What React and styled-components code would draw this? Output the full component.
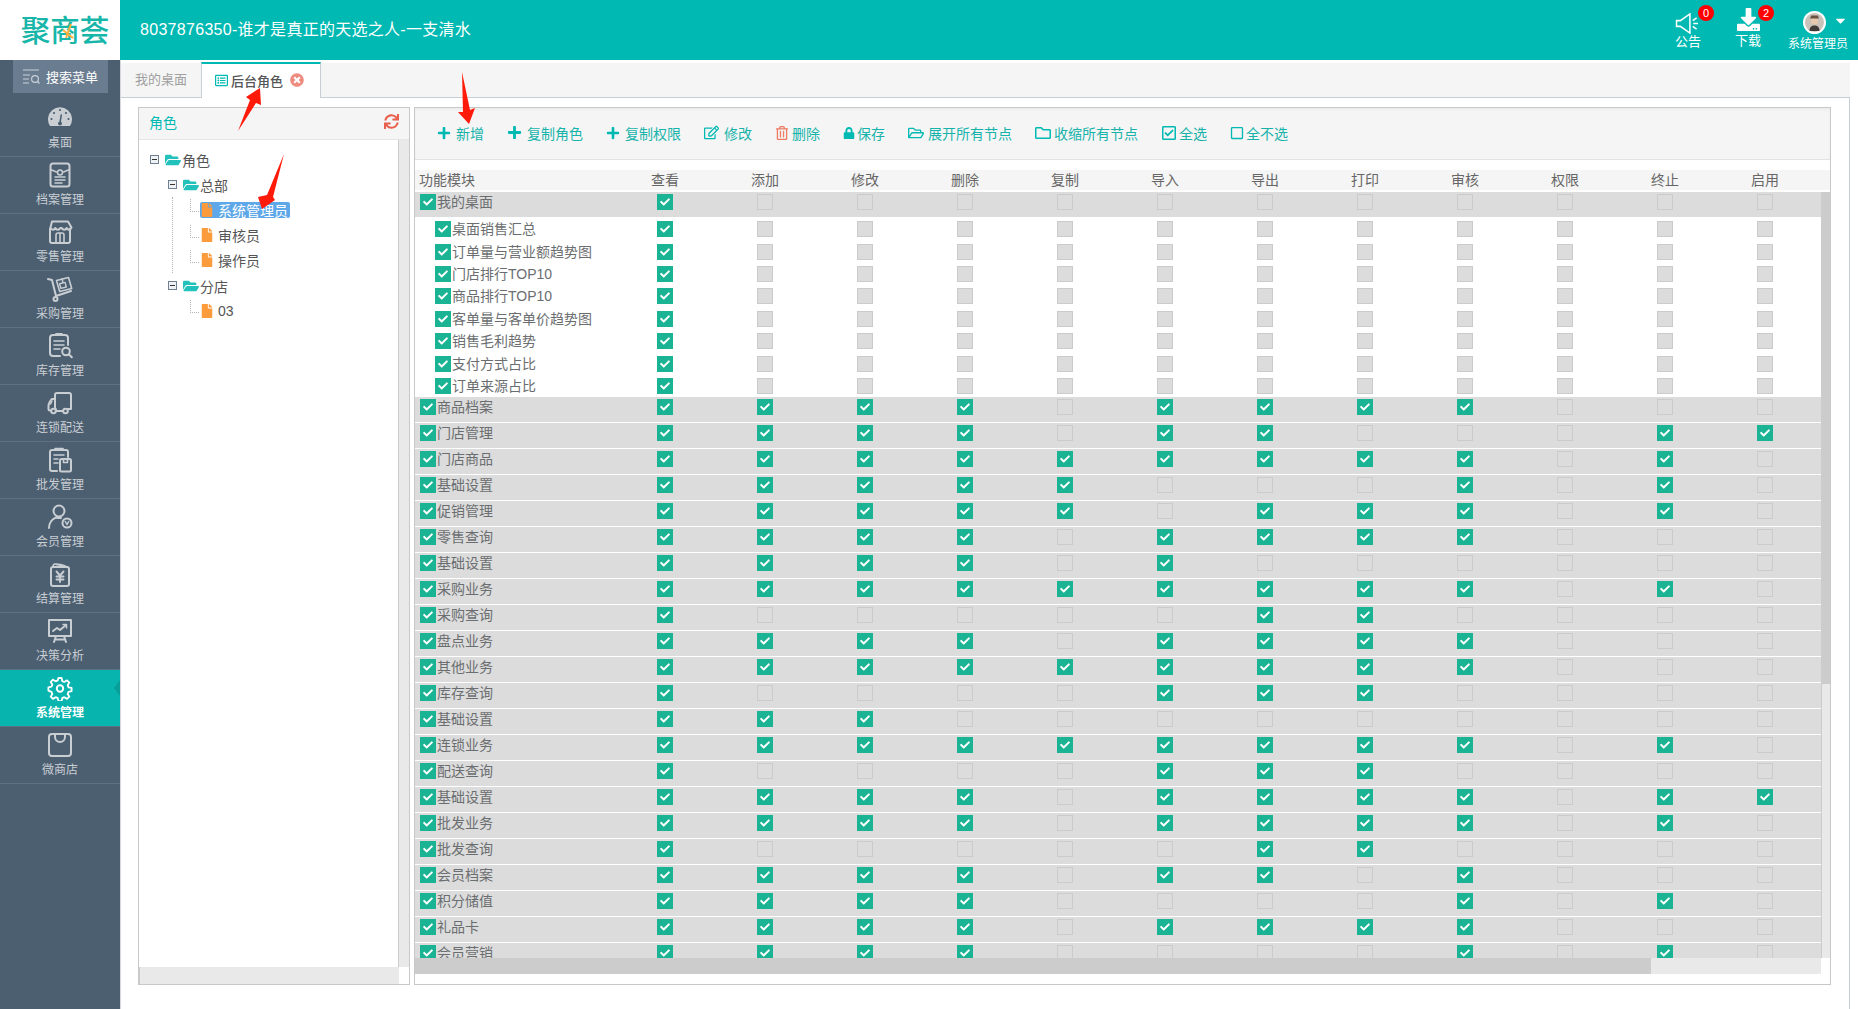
import React from "react";
import styled, { createGlobalStyle } from "styled-components";
import {
  FaPlus, FaRegEdit, FaRegTrashAlt, FaLock, FaRegFolderOpen, FaRegFolder,
  FaRegCheckSquare, FaRegSquare, FaSync, FaRegListAlt, FaTimesCircle, FaFile,
  FaFolderOpen, FaCheck, FaDownload, FaCaretDown,
} from "react-icons/fa";

const TEAL = "#00b9b2";
const Global = createGlobalStyle`
  html, body { margin: 0; padding: 0; background: #fff; }
  body { font-family: "Liberation Sans", "Noto Sans CJK SC", sans-serif; font-size: 14px; color: #676a6c; }
  * { box-sizing: border-box; }
`;

const Page = styled.div`
  position: relative; width: 100%; height: 100vh; display: flex; flex-direction: column; overflow: hidden; background: #fff;
`;
const Header = styled.header`
  height: 60px; flex: none; display: flex; align-items: stretch; background: ${TEAL}; color: #fff;
`;
const LogoBox = styled.div`
  width: 120px; background: #fff; display: flex; align-items: center; justify-content: center; padding: 2px 0 0 10px;
`;
const LogoText = styled.span`
  position: relative; font-size: 29.5px; line-height: 34px; font-weight: 500; color: #17b6a9; white-space: nowrap;
`;
const LogoAccent = styled.svg`
  position: absolute; left: 37px; top: 7px; width: 20px; height: 20px;
`;
const Title = styled.h1`
  margin: 0 0 0 20px; font-size: 16px; font-weight: 400; line-height: 60px; flex: 1; white-space: nowrap; letter-spacing: 0.27px;
`;
const TitleNum = styled.span` letter-spacing: 0.3px; `;
const HeadActions = styled.div`
  display: flex; align-items: flex-start; padding-right: 10px;
`;
const HeadAction = styled.div`
  position: relative; width: 60px; height: 60px; display: flex; flex-direction: column; align-items: center; font-size: ${(p) => p.$fs || 13}px; line-height: 16px; padding-top: ${(p) => p.$pt}px; margin-right: ${(p) => p.$mr || 0}px; white-space: nowrap;
`;
const ActionIcon = styled.div`
  height: ${(p) => p.$h}px; display: flex; align-items: flex-start; justify-content: center; margin-right: ${(p) => p.$mr || 0}px;
`;
const Badge = styled.span`
  position: absolute; top: 5px; left: 40px; width: 16px; height: 16px; border-radius: 50%; background: #f00; color: #fff; font-size: 11px; line-height: 16px; text-align: center;
`;
const Caret = styled.span`
  position: absolute; top: 13px; right: 0; line-height: 0; font-size: 15px;
`;

const Body = styled.div` flex: 1; min-height: 0; display: flex; `;
const Sidebar = styled.nav`
  width: 120px; flex: none; background: #4c5f71; display: flex; flex-direction: column; color: #c9ced3; font-size: 12px;
`;
const SearchBox = styled.div`
  width: 95px; height: 33px; margin: 0 0 7px 13px; background: #6a7d90; color: #fff; display: flex; align-items: center; justify-content: center; gap: 6px; font-size: 13px; flex: none;
`;
const NavItem = styled.div`
  position: relative; height: 57px; flex: none; display: flex; flex-direction: column; align-items: center; border-bottom: 1px solid #5e7082; padding-top: 5px; line-height: 16px;
  background: ${(p) => (p.$active ? "#08b4ae" : "transparent")};
  color: ${(p) => (p.$active ? "#fff" : "#c9ced3")};
  font-weight: ${(p) => (p.$active ? 700 : 400)};
  ${(p) => p.$active && `
    &::after { content: ""; position: absolute; right: 0; top: 10px; border: 8px solid transparent; border-right: 6px solid #0a9e99; border-left: 0; }
  `}
`;
const NavIcon = styled.svg`
  width: 26px; height: 26px; margin-bottom: 4px; fill: none; stroke: currentColor; stroke-width: 2; stroke-linecap: round; stroke-linejoin: round; flex: none;
`;

const Main = styled.main`
  flex: 1; min-width: 0; margin-right: 8px; padding-top: 2px; display: flex; flex-direction: column; border-left: 1px solid #d5d9dd;
`;
const TabStrip = styled.div`
  height: 35px; flex: none; display: flex; background: #f5f5f5; border-bottom: 1px solid #c8ced4; margin-top: 1px; font-size: 13px;
`;
const Tab = styled.div`
  display: flex; align-items: center; height: ${(p) => (p.$active ? "36px" : "33px")}; width: ${(p) => (p.$active ? "120px" : "80px")};
  margin-top: ${(p) => (p.$active ? "-1px" : "0")}; padding: 0 0 2px ${(p) => (p.$active ? "13px" : "14px")};
  color: ${(p) => (p.$active ? "#555" : "#a0a0a0")}; font-weight: ${(p) => (p.$active ? 500 : 400)};
  background: ${(p) => (p.$active ? "#fff" : "transparent")};
  border-top: ${(p) => (p.$active ? `2px solid ${TEAL}` : "0")};
  border-left: ${(p) => (p.$active ? "1px solid #c8ced4" : "0")};
  border-right: ${(p) => (p.$active ? "1px solid #c8ced4" : "0")};
  gap: 3px;
`;
const TabClose = styled.span` margin-left: 4px; line-height: 0; color: #ee8c80; `;
const Content = styled.div`
  flex: 1; min-height: 0; display: flex; gap: 4px; padding: 9px 18px 24px 17px; border-right: 1px solid #c8ced4;
`;
const Panel = styled.section`
  width: ${(p) => p.$w}; flex: ${(p) => (p.$w ? "none" : "1")}; min-width: 0; border: 1px solid #c8c8c8; display: flex; flex-direction: column; background: #fff;
`;
const PanelHead = styled.div`
  height: 32px; flex: none; background: #f5f5f5; color: ${TEAL}; padding: 0 10px 4px; display: flex; align-items: center; justify-content: space-between; border-bottom: 1px solid #e6e6e6;
`;
const RefreshIcon = styled.span` line-height: 0; color: #e8604c; font-size: 15px; `;
const TreeWrap = styled.div` flex: 1; min-height: 0; display: flex; `;
const Tree = styled.div` flex: 1; padding: 7px 0 0 11px; color: #555; `;
const SideTrack = styled.div` width: 11px; flex: none; background: #e9e9e9; border-left: 1px solid #ccc; `;
const BottomBar = styled.div` height: 17px; flex: none; display: flex; `;
const BottomTrack = styled.div` flex: 1; background: #e9e9e9; border-left: 1px solid #ccc; `;
const BottomCorner = styled.div` width: 10px; background: #fff; `;
const TreeRow = styled.div`
  height: 25.2px; display: flex; align-items: center; padding-left: ${(p) => p.$indent || 0}px;
`;
const Expander = styled.span`
  width: 9px; height: 9px; flex: none; border: 1px solid #6f8090; background: #eef2f5; display: flex; align-items: center; justify-content: center; margin-right: 6px;
  &::before { content: ""; width: 5px; height: 1px; background: #333; }
`;
const FolderIco = styled.span` line-height: 0; color: #22c1bb; font-size: 16px; margin-right: 1px; `;
const Group = styled.div`
  margin-left: 22px; padding-left: 17px; border-left: 1px dotted ${(p) => (p.$line ? "#b5b5b5" : "transparent")};
`;
const LeafRow = styled.div` height: 25.2px; display: flex; align-items: center; `;
const Connector = styled.span`
  width: 9px; height: 13px; flex: none; margin-bottom: 8px; border-left: 1px dotted #b5b5b5; border-bottom: 1px dotted #b5b5b5; margin-right: 1px;
`;
const Leaf = styled.span`
  display: flex; align-items: center; height: 16px; padding: 0 2px 0 0; gap: 4px; border-radius: 2px; white-space: nowrap;
  background: ${(p) => (p.$sel ? "#5ea7e8" : "transparent")}; color: ${(p) => (p.$sel ? "#fff" : "#555")};
`;
const LeafIco = styled.span` line-height: 0; color: #fb9b3c; font-size: 14px; `;

const Toolbar = styled.div`
  height: 52px; flex: none; background: #f5f5f5; border-bottom: 1px solid #e3e3e3; box-shadow: inset 0 2px 2px #ececec; display: flex; align-items: center; gap: 23px; padding: 0 0 2px 22px;
`;
const ToolBtn = styled.div`
  display: flex; align-items: center; gap: ${(p) => p.$gap}px; color: #17b3ab; white-space: nowrap;
`;
const ToolIco = styled.span` line-height: 0; display: flex; color: ${(p) => p.$c || "#00b9b2"}; font-size: ${(p) => p.$s || 14}px; `;
const TableHead = styled.div`
  height: 20px; flex: none; margin-top: 10px; background: #f5f5f5; display: grid; grid-template-columns: 200px repeat(12, 100px); align-items: center; line-height: 20px; color: #666;
`;
const HeadCell = styled.div`
  text-align: ${(p) => (p.$left ? "left" : "center")}; padding-left: ${(p) => (p.$left ? "4px" : "0")};
`;
const TableMid = styled.div` flex: 1; min-height: 0; display: flex; margin-top: 2px; `;
const Rows = styled.div` flex: 1; min-width: 0; overflow: hidden; `;
const VTrack = styled.div` width: 9px; flex: none; background: #e9e9e9; border-left: 1px solid #ccc; `;
const VThumb = styled.div` height: 492px; background: #ccc; `;
const Row = styled.div`
  display: grid; grid-template-columns: 200px repeat(12, 100px); align-items: start; height: ${(p) => (p.$sub ? "22.4px" : "25px")};
  padding-top: ${(p) => (p.$sub ? "3.2px" : "2px")}; margin-bottom: ${(p) => (p.$sep ? "1px" : "0")};
  background: ${(p) => (p.$sub ? "#fff" : "#dcdcdc")};
`;
const SubGroup = styled.div` height: 180px; padding-top: 1px; background: #fff; `;
const NameCell = styled.div`
  display: flex; align-items: center; gap: 1px; padding-left: ${(p) => (p.$sub ? "20px" : "5px")}; white-space: nowrap; line-height: 16px; height: 16px; color: #6b6e70;
`;
const BoxCell = styled.div` display: flex; justify-content: center; `;
const Check = styled.span`
  width: 16px; height: 16px; flex: none; display: flex; align-items: center; justify-content: center; color: #fff; font-size: 10px; line-height: 0;
  background: ${(p) => (p.$on ? "#1ab394" : p.$sub ? "#dcdcdc" : "transparent")};
  border: ${(p) => (p.$on ? "0" : "1px solid #cbcbcb")};
`;
const HBar = styled.div` height: 16px; flex: none; display: flex; margin: 0 9px 10px 0; background: #e9e9e9; `;
const HThumb = styled.div` width: 1236px; background: #ccc; `;
const Arrows = styled.svg`
  position: absolute; left: 0; top: 0; width: 100%; height: 100%; pointer-events: none; fill: #ff1a0a;
`;

const box = (v) => v.split("").map((c) => c === "1");
const COLS = ["查看", "添加", "修改", "删除", "复制", "导入", "导出", "打印", "审核", "权限", "终止", "启用"];
const SUBS = ["桌面销售汇总", "订单量与营业额趋势图", "门店排行TOP10", "商品排行TOP10", "客单量与客单价趋势图", "销售毛利趋势", "支付方式占比", "订单来源占比"];
const ROWS = [
  ["商品档案", "111101111000"], ["门店管理", "111101100011"], ["门店商品", "111111111010"],
  ["基础设置", "111110001010"], ["促销管理", "111110111010"], ["零售查询", "111101111000"],
  ["基础设置", "111101000000"], ["采购业务", "111111111010"], ["采购查询", "100000110000"],
  ["盘点业务", "111101111000"], ["其他业务", "111111111000"], ["库存查询", "100001110000"],
  ["基础设置", "111000000000"], ["连锁业务", "111111111010"], ["配送查询", "100001110000"],
  ["基础设置", "111101111011"], ["批发业务", "111101111010"], ["批发查询", "100000110000"],
  ["会员档案", "111101101000"], ["积分储值", "111100001010"], ["礼品卡", "111101111000"],
  ["会员营销", "111100001010"],
];
const ICONS = {
  gauge: (<g><path d="M3 21a12 12 0 1 1 20 0z" fill="currentColor" stroke="none" /><path d="M13 18l1.200-8" stroke="#4c5f71" strokeWidth="1.600" /><circle cx="13" cy="18.500" r="2" fill="#4c5f71" stroke="none" /><g fill="#4c5f71" stroke="none"><circle cx="13" cy="5" r="1.100" /><circle cx="7" cy="8" r="1.100" /><circle cx="19" cy="8" r="1.100" /><circle cx="4.500" cy="14" r="1.100" /><circle cx="21.500" cy="14" r="1.100" /></g></g>),
  file: (<g><rect x="3.500" y="1.500" width="19" height="23" rx="2.500" /><path d="M3.500 7.500l6 2.500M22.500 7.500l-6 2.500M8 15h10M8 18h10M8 21h7" strokeWidth="1.500" /><circle cx="13" cy="10.500" r="2.500" strokeWidth="1.500" /></g>),
  store: (<g><path d="M3 9.500V22a2 2 0 0 0 2 2h16a2 2 0 0 0 2-2V9.500" /><path d="M5 2.500h16l3.500 6c-1 2.800-3.800 2.800-4.800.5-1 2.300-4 2.300-5 0h-1.400c-1 2.300-4 2.300-5 0-1 2.300-3.800 2.300-4.800-.5z" /><path d="M9 24v-8a2 2 0 0 1 2-2h4a2 2 0 0 1 2 2v8M13 14v10" strokeWidth="1.600" /></g>),
  cart: (<g><path d="M1 3l4 1 4 16 15-5" /><circle cx="8.500" cy="23" r="2" /><path d="M9.500 4.500l12-3 3.200 11-12 3z" strokeWidth="1.600" /><path d="M12.600 7.800l5.500-1.400 1.200 4.600-5.400 1.400zM15 2.800l1 3.600" strokeWidth="1.400" /></g>),
  search: (<g><path d="M21 12V5a3 3 0 0 0-3-3H6a3 3 0 0 0-3 3v15a3 3 0 0 0 3 3h7" /><path d="M7 8h10M7 12h10M7 16h6" strokeWidth="1.600" /><path d="M9 2V0.800h6V2" strokeWidth="1.600" /><circle cx="19" cy="18.500" r="3.800" /><path d="M22 21.500l2.800 2.800" /></g>),
  truck: (<g><path d="M9 19H8V5a2 2 0 0 1 2-2h12a2 2 0 0 1 2 2v14h-3" /><path d="M8 9H5c-1 .2-3.500 5-3.500 6.500V19a1.500 1.500 0 0 0 1.500 1.500h1" /><path d="M9 21h7" /><circle cx="6.500" cy="21" r="2.300" /><circle cx="18.500" cy="21" r="2.300" /><path d="M5 11l-1.500 3" strokeWidth="1.500" /></g>),
  clip: (<g><path d="M10 24H5a2 2 0 0 1-2-2V5a2 2 0 0 1 2-2h14a2 2 0 0 1 2 2v5" /><path d="M8 3V1.500h8V3" strokeWidth="1.600" /><path d="M7 8h10M7 12h4M7 16h4" strokeWidth="1.600" /><rect x="13" y="12" width="11" height="12.500" rx="1.500" /><path d="M16.500 12v3.500h4V12" strokeWidth="1.600" /></g>),
  user: (<g><circle cx="12" cy="7" r="5.500" /><path d="M2 24c0-5 3.200-9 7-10.500 2 .5 3.500.8 5 .5" /><circle cx="20" cy="19" r="4.500" /><path d="M18.300 17.500l1.700 3 1.700-3" strokeWidth="1.500" /></g>),
  wallet: (<g><rect x="4" y="6" width="18" height="19" rx="2" /><path d="M6 6c0-2 .5-3 2-3 3 0 8 .5 12 3" strokeWidth="1.600" /><path d="M9 3.500c3 .2 6 1 9 2.500" strokeWidth="1.300" /><path d="M9.500 10.500l3.500 4 3.500-4M13 14.500V21M9.500 15.500h7M9.500 18.500h7" strokeWidth="1.900" /></g>),
  chart: (<g><rect x="2" y="2" width="22" height="16" /><path d="M7 24l2-6M19 24l-2-6M9 21.500h8" /><path d="M6 13l4-3 3 2 6-5" /><path d="M16 6.500h3.500V10" strokeWidth="1.500" /></g>),
  gear: (<g><path d="M11.200 2h3.600l.7 3.400 2.300 1 3-1.800 2.600 2.500-1.900 2.900 1 2.400 3.400.7v3.600l-3.400.7-1 2.300 1.900 3-2.600 2.500-3-1.900-2.300 1-.7 3.400h-3.600l-.7-3.400-2.300-1-3 1.900-2.500-2.500 1.800-3-1-2.300L.1 16v-3.600l3.400-.7 1-2.400-1.800-2.900 2.500-2.500 3 1.800 2.300-1z" transform="translate(1.300 1.200) scale(.9)" /><circle cx="13" cy="13.500" r="3.200" /></g>),
  bag: (<g><rect x="2" y="2" width="22" height="22" rx="3" /><path d="M8 2v3a5 5 0 0 0 10 0V2" /></g>),
};
const NAV = [
  ["gauge", "桌面"], ["file", "档案管理"], ["store", "零售管理"], ["cart", "采购管理"], ["search", "库存管理"],
  ["truck", "连锁配送"], ["clip", "批发管理"], ["user", "会员管理"], ["wallet", "结算管理"], ["chart", "决策分析"],
  ["gear", "系统管理"], ["bag", "微商店"],
];
const TOOLS = [
  { Ico: FaPlus, label: "新增", s: 14, gap: 5 },
  { Ico: FaPlus, label: "复制角色", s: 15, gap: 5 },
  { Ico: FaPlus, label: "复制权限", s: 14, gap: 5 },
  { Ico: FaRegEdit, label: "修改", s: 15, gap: 5 },
  { Ico: FaRegTrashAlt, label: "删除", s: 14, gap: 3, c: "#ee7b62" },
  { Ico: FaLock, label: "保存", s: 12, gap: 2 },
  { Ico: FaRegFolderOpen, label: "展开所有节点", s: 16, gap: 4 },
  { Ico: FaRegFolder, label: "收缩所有节点", s: 16, gap: 3 },
  { Ico: FaRegCheckSquare, label: "全选", s: 16, gap: 2 },
  { Ico: FaRegSquare, label: "全不选", s: 14, gap: 2 },
];

function Boxes({ bits, sub }) {
  return box(bits).map((on, i) => (
    <BoxCell key={i}>
      <Check $on={on} $sub={sub}>{on && <FaCheck />}</Check>
    </BoxCell>
  ));
}

function NameBox({ sub, label }) {
  return (
    <NameCell $sub={sub}>
      <Check $on><FaCheck /></Check>
      <span>{label}</span>
    </NameCell>
  );
}

export default function App() {
  return (
    <Page>
      <Global />
      <Header>
        <LogoBox>
          <LogoText>
            聚商荟
            <LogoAccent viewBox="0 0 20 20"><path d="M13 3L8 17M5 9l10 8" stroke="#fbb03b" strokeWidth="2" fill="none" /></LogoAccent>
          </LogoText>
        </LogoBox>
        <Title><TitleNum>8037876350</TitleNum>-谁才是真正的天选之人-一支清水</Title>
        <HeadActions>
          <HeadAction $pt={13}>
            <ActionIcon $h={21}>
              <svg width="26" height="21" viewBox="0 0 26 22" fill="none" stroke="#fff" strokeWidth="1.600">
                <path d="M1 8h4L15 1v20L5 14H1z" /><path d="M18 8l4-3M18.500 11h5M18 14l4 3" />
              </svg>
            </ActionIcon>
            <span>公告</span>
            <Badge>0</Badge>
          </HeadAction>
          <HeadAction $pt={8} $mr={10}>
            <ActionIcon $h={25}><FaDownload size={23} /></ActionIcon>
            <span>下载</span>
            <Badge>2</Badge>
          </HeadAction>
          <HeadAction $fs={12} $pt={11}>
            <ActionIcon $h={25} $mr={8}>
              <svg width="23" height="23" viewBox="0 0 23 23">
                <circle cx="11.500" cy="11.500" r="11.500" fill="#fff" />
                <circle cx="11.500" cy="11.500" r="9.500" fill="#c9c3bb" />
                <circle cx="11.500" cy="10" r="3.600" fill="#e5c8ae" />
                <path d="M7 7.500h9l-1.200-3h-6.600z" fill="#6a5240" />
                <path d="M6.500 20c0-4 2-5.500 5-5.500s5 1.500 5 5.500z" fill="#403a38" />
              </svg>
            </ActionIcon>
            <span>系统管理员</span>
            <Caret><FaCaretDown /></Caret>
          </HeadAction>
        </HeadActions>
      </Header>
      <Body>
        <Sidebar>
          <SearchBox>
            <svg width="17" height="15" viewBox="0 0 17 15" fill="none" stroke="#c9d0d6" strokeWidth="1.200">
              <path d="M0 1h16M0 6h7M0 10h6M0 14h6" /><circle cx="12" cy="10" r="3.400" /><path d="M14.500 12.500l2 2" />
            </svg>
            搜索菜单
          </SearchBox>
          {NAV.map(([ic, label]) => (
            <NavItem key={label} $active={label === "系统管理"}>
              <NavIcon viewBox="0 0 26 26">{ICONS[ic]}</NavIcon>
              <span>{label}</span>
            </NavItem>
          ))}
        </Sidebar>
        <Main>
          <TabStrip>
            <Tab>我的桌面</Tab>
            <Tab $active>
              <ToolIco $s={13}><FaRegListAlt /></ToolIco>
              后台角色
              <TabClose><FaTimesCircle size={14} /></TabClose>
            </Tab>
          </TabStrip>
          <Content>
            <Panel $w="272px">
              <PanelHead>角色<RefreshIcon><FaSync /></RefreshIcon></PanelHead>
              <TreeWrap>
                <Tree>
                  <TreeRow><Expander /><FolderIco><FaFolderOpen /></FolderIco>角色</TreeRow>
                  <TreeRow $indent={18}><Expander /><FolderIco><FaFolderOpen /></FolderIco>总部</TreeRow>
                  <Group $line>
                    <LeafRow><Connector /><Leaf $sel><LeafIco><FaFile /></LeafIco>系统管理员</Leaf></LeafRow>
                    <LeafRow><Connector /><Leaf><LeafIco><FaFile /></LeafIco>审核员</Leaf></LeafRow>
                    <LeafRow><Connector /><Leaf><LeafIco><FaFile /></LeafIco>操作员</Leaf></LeafRow>
                  </Group>
                  <TreeRow $indent={18}><Expander /><FolderIco><FaFolderOpen /></FolderIco>分店</TreeRow>
                  <Group>
                    <LeafRow><Connector /><Leaf><LeafIco><FaFile /></LeafIco>03</Leaf></LeafRow>
                  </Group>
                </Tree>
                <SideTrack />
              </TreeWrap>
              <BottomBar><BottomTrack /><BottomCorner /></BottomBar>
            </Panel>
            <Panel>
              <Toolbar>
                {TOOLS.map(({ Ico, label, s, c, gap }) => (
                  <ToolBtn key={label} $gap={gap}>
                    <ToolIco $s={s} $c={c}><Ico /></ToolIco>
                    {label}
                  </ToolBtn>
                ))}
              </Toolbar>
              <TableHead>
                <HeadCell $left>功能模块</HeadCell>
                {COLS.map((c) => <HeadCell key={c}>{c}</HeadCell>)}
              </TableHead>
              <TableMid>
                <Rows>
                  <Row>
                    <NameBox label="我的桌面" />
                    <Boxes bits="100000000000" />
                  </Row>
                  <SubGroup>
                    {SUBS.map((s) => (
                      <Row key={s} $sub>
                        <NameBox sub label={s} />
                        <Boxes sub bits="100000000000" />
                      </Row>
                    ))}
                  </SubGroup>
                  {ROWS.map(([label, bits], i) => (
                    <Row key={i} $sep>
                      <NameBox label={label} />
                      <Boxes bits={bits} />
                    </Row>
                  ))}
                </Rows>
                <VTrack><VThumb /></VTrack>
              </TableMid>
              <HBar><HThumb /></HBar>
            </Panel>
          </Content>
        </Main>
      </Body>
      <Arrows viewBox="0 0 1858 1009" preserveAspectRatio="none">
        <polygon points="238,131 250,100 246,97 260,88 261,105 256,103" />
        <polygon points="284,154 273,197 275,200 262,209 258,197 267,195" />
        <polygon points="462,72 470,110 475,108 469,124 458,112 463,112" />
      </Arrows>
    </Page>
  );
}
